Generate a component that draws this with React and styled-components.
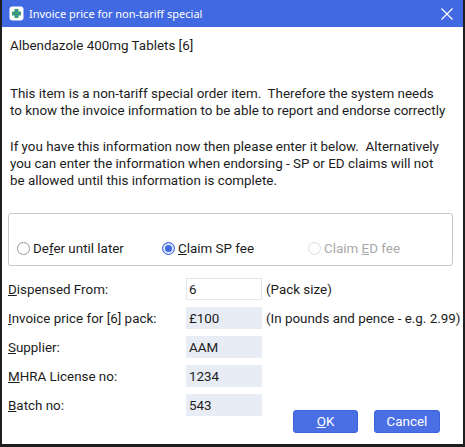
import styled, { createGlobalStyle } from 'styled-components'

const GlobalStyle = createGlobalStyle`
  html, body {
    margin: 0;
    padding: 0;
    background: #ffffff;
  }
  body {
    font-family: Roboto, "Liberation Sans", sans-serif;
    color: #1c1c1c;
  }
`;

const Window = styled.div`
  width: 465px;
  height: 447px;
  box-sizing: border-box;
  border-left: 2px solid #1e1e1e;
  border-right: 2px solid #1e1e1e;
  border-bottom: 3px solid #1e1e1e;
  background: #fff;
  display: flex;
  flex-direction: column;
  overflow: hidden;
`;

const TitleBar = styled.div`
  height: 27px;
  flex: none;
  background: #4169e1;
  display: flex;
  align-items: center;
  padding-left: 7px;
  padding-right: 10px;
  color: #fff;
  font-family: "Noto Sans", sans-serif;
  font-size: 11px;
`;

const TitleText = styled.span`
  margin-left: 5px;
  flex: 1;
`;

const Body = styled.div`
  padding: 10px 8px 0 8px;
  font-size: 13.4px;
  line-height: 17px;
  white-space: nowrap;
`;

const Heading = styled.div`
  margin-bottom: 31px;
`;

const Para = styled.p`
  margin: 0 0 ${p => p.$gap || 0}px 0;
`;

const GroupBox = styled.div`
  margin: 0 2px 0 -2px;
  height: 53px;
  box-sizing: border-box;
  border: 1px solid #c9c9c9;
  border-radius: 3px;
  display: grid;
  grid-template-columns: 145px 146px 1fr;
  align-items: end;
  padding: 0 0 8px 8px;
`;

const RadioItem = styled.label`
  display: flex;
  align-items: center;
  gap: 3px;
  color: ${p => (p.$disabled ? '#a8a8a8' : 'inherit')};
`;

const RadioCircle = styled.span`
  width: 13px;
  height: 13px;
  box-sizing: border-box;
  border-radius: 50%;
  border: 1px solid ${p => (p.$checked ? '#4169e1' : p.$disabled ? '#dcdcdc' : '#9a9a9a')};
  background: ${p => (p.$checked ? '#4169e1' : '#fff')};
  box-shadow: ${p => (p.$checked ? 'inset 0 0 0 2px #dfe6fb' : 'none')};
`;

const Form = styled.div`
  margin: 12px 0 0 -2px;
  display: grid;
  grid-template-columns: 178px 76px minmax(0, 1fr);
  grid-template-rows: repeat(5, 22px) 10px;
  row-gap: 7px;
  align-items: center;
`;

const FieldBox = styled.div`
  height: 22px;
  box-sizing: border-box;
  padding: 0 0 0 2px;
  display: flex;
  align-items: center;
  background: ${p => (p.$editable ? '#fff' : '#e8ecf5')};
  border: 1px solid ${p => (p.$editable ? '#e2e6ee' : '#e8ecf5')};
`;

const Note = styled.span`
  padding-left: 4px;
`;

const ButtonBar = styled.div`
  grid-column: 3;
  grid-row: 5 / 7;
  align-self: end;
  justify-self: end;
  margin-right: 15px;
  display: flex;
  gap: 16px;
`;

const Button = styled.button`
  width: ${p => p.$w}px;
  height: 23px;
  border: 1px solid #3d63dc;
  border-radius: 3px;
  background: #4a6fe5;
  color: #fff;
  font-family: Roboto, sans-serif;
  font-size: 13.4px;
  padding: 0;
`;

function AppIcon() {
  return (
    <svg width="15" height="15" viewBox="0 0 15 15">
      <rect x="0.5" y="0.5" width="14" height="14" rx="3" fill="#fff" />
      <rect x="5.5" y="3" width="4" height="9" fill="#3aa856" />
      <rect x="3" y="5.5" width="9" height="4" fill="#3aa856" />
      <rect x="6.5" y="4" width="2" height="2" fill="#3d7bd6" />
      <rect x="4" y="6.5" width="2" height="2" fill="#3d7bd6" />
      <rect x="9" y="6.5" width="2" height="2" fill="#3d7bd6" />
      <rect x="6.5" y="9" width="2" height="2" fill="#3d7bd6" />
    </svg>
  );
}

function CloseIcon() {
  return (
    <svg width="12" height="12" viewBox="0 0 12 12">
      <path d="M0.5 0.5 L11.5 11.5 M11.5 0.5 L0.5 11.5" stroke="#fff" strokeWidth="1.2" />
    </svg>
  );
}

const fields = [
  { label: <><u>D</u>ispensed From:</>, value: '6', editable: true, note: '(Pack size)' },
  { label: <><u>I</u>nvoice price for [6] pack:</>, value: '£100', note: '(In pounds and pence - e.g. 2.99)' },
  { label: <><u>S</u>upplier:</>, value: 'AAM' },
  { label: <><u>M</u>HRA License no:</>, value: '1234' },
  { label: <><u>B</u>atch no:</>, value: '543' },
];

export default function App() {
  return (
    <>
      <GlobalStyle />
      <Window>
        <TitleBar>
          <AppIcon />
          <TitleText>Invoice price for non-tariff special</TitleText>
          <CloseIcon />
        </TitleBar>
        <Body>
          <Heading>Albendazole 400mg Tablets [6]</Heading>
          <Para $gap={19}>
            This item is a non-tariff special order item.&nbsp; Therefore the system needs<br />
            to know the invoice information to be able to report and endorse correctly
          </Para>
          <Para $gap={24}>
            If you have this information now then please enter it below.&nbsp; Alternatively<br />
            you can enter the information when endorsing - SP or ED claims will not<br />
            be allowed until this information is complete.
          </Para>
          <GroupBox>
            <RadioItem>
              <RadioCircle />
              <span>De<u>f</u>er until later</span>
            </RadioItem>
            <RadioItem>
              <RadioCircle $checked />
              <span><u>C</u>laim SP fee</span>
            </RadioItem>
            <RadioItem $disabled>
              <RadioCircle $disabled />
              <span>Claim <u>E</u>D fee</span>
            </RadioItem>
          </GroupBox>
          <Form>
            {fields.map((f, i) => (
              <>
                <span key={'l' + i} style={{ gridRow: i + 1, gridColumn: 1 }}>{f.label}</span>
                <FieldBox key={'v' + i} $editable={f.editable} style={{ gridRow: i + 1, gridColumn: 2 }}>
                  {f.value}
                </FieldBox>
                {f.note && <Note key={'n' + i} style={{ gridRow: i + 1, gridColumn: 3 }}>{f.note}</Note>}
              </>
            ))}
            <ButtonBar>
              <Button $w={65}><u>O</u>K</Button>
              <Button $w={66}>Cancel</Button>
            </ButtonBar>
          </Form>
        </Body>
      </Window>
    </>
  );
}
